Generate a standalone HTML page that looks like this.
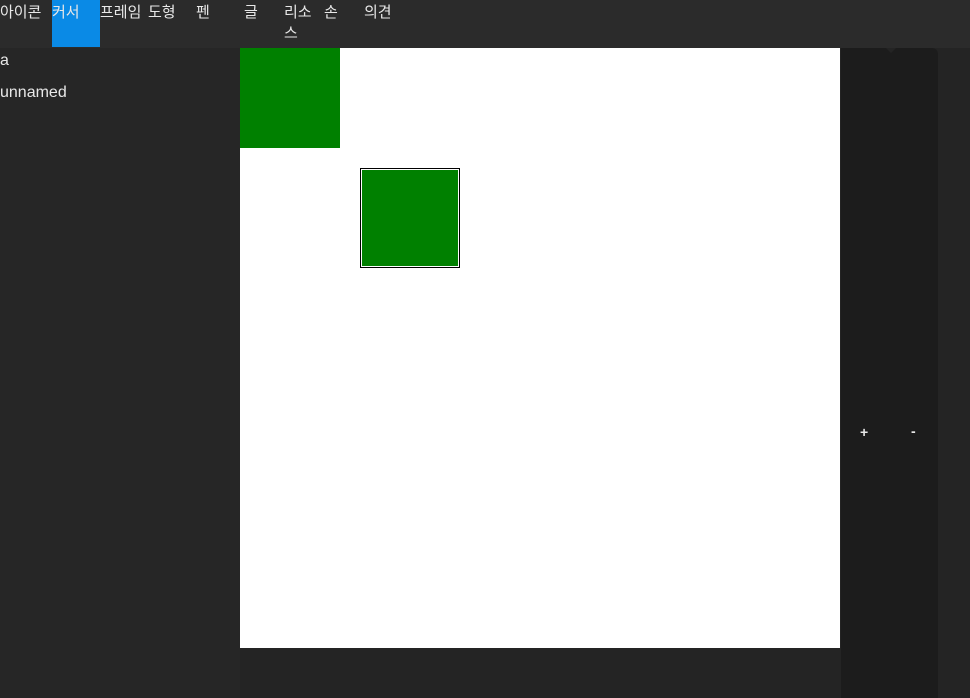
<!DOCTYPE html>
<html><head><meta charset="utf-8"><style>
body{margin:0;width:970px;height:698px;background:#242424;position:relative;overflow:hidden;font-family:"Liberation Sans","Noto Sans CJK KR",sans-serif;color:#e8e8e8;font-size:16px}
.top{position:absolute;left:0;top:0;width:970px;height:48px;background:#2b2b2b}
.m{position:absolute;top:2px;line-height:21px;white-space:nowrap;font-size:15px}
.left{position:absolute;left:0;top:48px;width:240px;height:650px;background:#262626}
.canvas{position:absolute;left:240px;top:48px;width:600px;height:600px;background:#fff}
.right{position:absolute;left:841px;top:48px;width:97px;height:650px;background:#1c1c1c;border-radius:0 6px 0 0}
</style></head><body>
<div class="top">
<div style="position:absolute;left:52px;top:0;width:48px;height:47px;background:#0a8ae6"></div>
<span class="m" style="left:0">아이콘</span>
<span class="m" style="left:52px">커서</span>
<span class="m" style="left:100px">프레임</span>
<span class="m" style="left:148px">도형</span>
<span class="m" style="left:196px">펜</span>
<span class="m" style="left:244px">글</span>
<span class="m" style="left:284px">리소<br>스</span>
<span class="m" style="left:324px">손</span>
<span class="m" style="left:364px">의견</span>
</div>
<div class="left">
<div style="position:absolute;left:0;top:3px;line-height:20px">a</div>
<div style="position:absolute;left:0;top:35px;line-height:20px">unnamed</div>
</div>
<div class="canvas">
<div style="position:absolute;left:0;top:0;width:100px;height:100px;background:#008000"></div>
<div style="position:absolute;left:121px;top:121px;width:96px;height:96px;background:#008000;border:1px solid #fff;outline:1px solid #000"></div>
</div>
<div class="right">
<div style="position:absolute;left:45px;top:0;width:0;height:0;border-left:5px solid transparent;border-right:5px solid transparent;border-top:5px solid #242424"></div>
<span style="position:absolute;left:19px;top:376px;font-size:14px;font-weight:bold">+</span>
<span style="position:absolute;left:70px;top:375px;font-size:14px;font-weight:bold">-</span>
</div>
</body></html>
